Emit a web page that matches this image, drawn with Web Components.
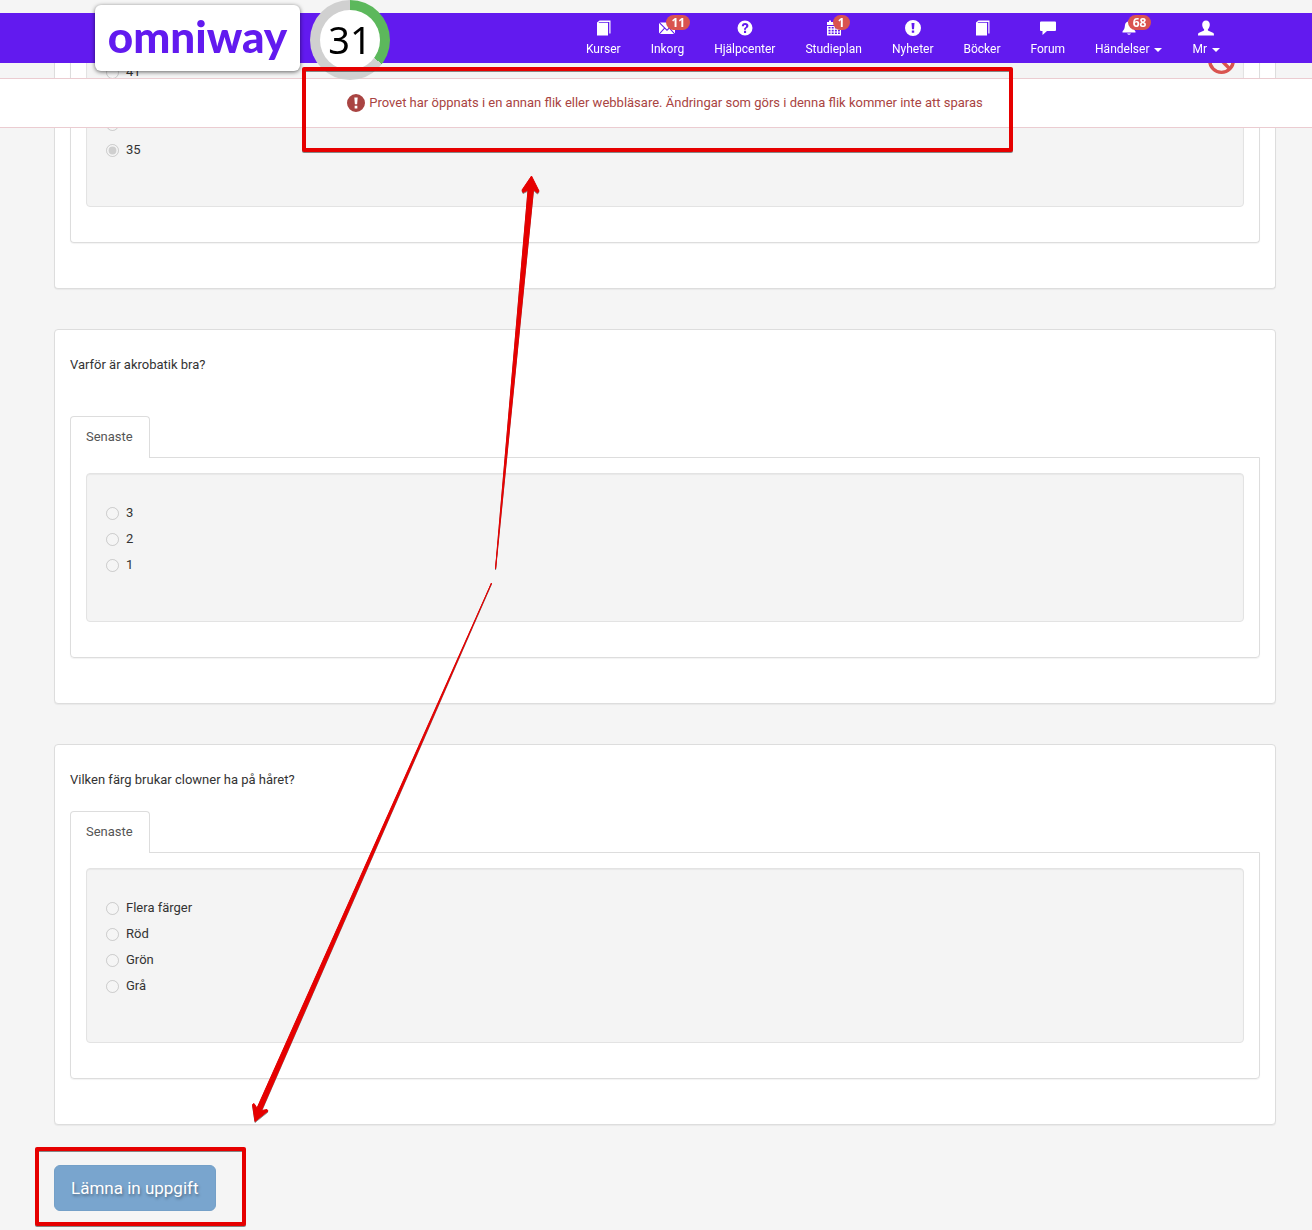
<!DOCTYPE html>
<html lang="sv">
<head>
<meta charset="utf-8">
<meta name="viewport" content="width=device-width, initial-scale=1">
<title>Omniway</title>
<style>
	html {
		background: #f5f5f5;
	}

	body {
		color: #333;
		font: 13px/20px Roboto, "Noto Sans", sans-serif;
		margin: 0;
		position: relative;
	}

	main {
		display: flex;
		flex-direction: column;
		gap: 40px;
		padding: 0 36px 17px 54px;
	}
</style>
</head>
<body>
<page-header>
	<site-logo slot="brand">omniway</site-logo>
	<countdown-ring slot="brand" value="31"></countdown-ring>
	<nav-item icon="book">Kurser</nav-item>
	<nav-item icon="mail" badge="11">Inkorg</nav-item>
	<nav-item icon="help">Hjälpcenter</nav-item>
	<nav-item icon="calendar" badge="1">Studieplan</nav-item>
	<nav-item icon="alert">Nyheter</nav-item>
	<nav-item icon="book">Böcker</nav-item>
	<nav-item icon="comment">Forum</nav-item>
	<nav-item icon="bell" badge="68" menu>Händelser</nav-item>
	<nav-item icon="user" menu>Mr</nav-item>
	<page-alert slot="alert">Provet har öppnats i en annan flik eller webbläsare. Ändringar som görs i denna flik kommer inte att sparas</page-alert>
</page-header>

<main>
	<question-card continued>
		<answer-option>41</answer-option>
		<answer-option></answer-option>
		<answer-option>33</answer-option>
		<answer-option checked>35</answer-option>
		<svg-icon slot="mark" name="ban"></svg-icon>
	</question-card>

	<question-card roomy>
		<span slot="question">Varför är akrobatik bra?</span>
		<answer-option>3</answer-option>
		<answer-option>2</answer-option>
		<answer-option>1</answer-option>
	</question-card>

	<question-card>
		<span slot="question">Vilken färg brukar clowner ha på håret?</span>
		<answer-option>Flera färger</answer-option>
		<answer-option>Röd</answer-option>
		<answer-option>Grön</answer-option>
		<answer-option>Grå</answer-option>
	</question-card>

	<submit-button>Lämna in uppgift</submit-button>
</main>

<markup-layer></markup-layer>

<script>
const ICONS = {
	book: `<path d="M4.500.5h11v13h-1.200V2H4.200L3.500 2.800h9.500V15.500H2V2.500z"/>`,
	mail: `<path d="M0 3l5 5-5 5.500zM16 3l-5 5 5 5.500zM1 2.500h14L8 9.500zM5.700 8.800L8 11l2.300-2.200L15 14H1z"/>`,
	help: `<path fill-rule="evenodd" d="M8 .5a7.500 7.500 0 1 1 0 15a7.500 7.500 0 0 1 0-15zM4.800 6.300h2.100c0-.9.400-1.400 1.200-1.400.7 0 1.100.4 1.100 1 0 .7-.4 1-1 1.500C7.300 8 7 8.500 7 9.700h2c0-.8.200-1.100.9-1.600.9-.7 1.500-1.300 1.500-2.400C11.400 4 10.100 3 8.200 3 6.100 3 4.800 4.200 4.800 6.300zM7 10.800V13h2.100v-2.200z"/>`,
	alert: `<path fill-rule="evenodd" d="M8 0a8 8 0 1 1 0 16A8 8 0 0 1 8 0zM6.500 3l.5 6.200h2L9.500 3zM6.800 10.400v2.400h2.400v-2.400z"/>`,
	calendar: `<path fill-rule="evenodd" d="M1 2h2V.5h2V2h6V.5h2V2h2v3H1zM1 6h14v9.500H1zM2.500 7v1.600h2V7zm3.200 0v1.600h2V7zm3.200 0v1.600h2V7zm3.100 0v1.600h1.900V7zM2.500 9.800v1.600h2V9.800zm3.200 0v1.600h2V9.800zm3.200 0v1.600h2V9.800zm3.100 0v1.600h1.900V9.800zM2.500 12.600v1.500h2v-1.500zm3.200 0v1.500h2v-1.500zm3.200 0v1.500h2v-1.500zm3.100 0v1.500h1.900v-1.500z"/>`,
	comment: `<path d="M1 1.500h14a1 1 0 0 1 1 1V10a1 1 0 0 1-1 1H7l-4.500 4V11H1a1 1 0 0 1-1-1V2.500a1 1 0 0 1 1-1z"/>`,
	bell: `<path d="M7 1.500C7 0 9 0 9 1.500c2.500.6 3 2.500 3.200 5 .2 2.200 1 3.200 2.300 5v1h-13v-1c1.300-1.800 2.100-2.800 2.300-5C4 4 4.500 2.100 7 1.500zM6 13.500h4q-2 2.600-4 0z"/>`,
	user: `<path d="M8 .5c2.500 0 3.800 1.700 3.800 4.200 0 1.900-.8 3.500-1.900 4.500v1.300l5 2.200c.8.400 1.100 1 1.100 2.800H0c0-1.800.3-2.400 1.100-2.800l5-2.200V9.200C5 8.200 4.200 6.600 4.200 4.700 4.200 2.200 5.500.5 8 .5z"/>`,
	ban: `<g fill="none" stroke="currentColor" stroke-width="2"><circle cx="8" cy="8" r="7"/><path d="M3 3l10 10"/></g>`
};

class SvgIcon extends HTMLElement {
	constructor() {
		super();
		this.attachShadow({mode: "open"});
	}

	connectedCallback() {
		this.shadowRoot.innerHTML = `
      <style>
        :host {
          block-size: var(--icon-size, 16px);
          display: inline-block;
          flex: none;
          inline-size: var(--icon-size, 16px);
        }

        svg {
          display: block;
          fill: currentColor;
          height: 100%;
          width: 100%;
        }
      </style>

      <svg viewBox="0 0 16 16" aria-hidden="true">${ICONS[this.getAttribute("name")]}</svg>
    `;
	}
}

class SiteLogo extends HTMLElement {
	constructor() {
		super();
		this.attachShadow({mode: "open"});
		this.shadowRoot.innerHTML = `
      <style>
        :host {
          display: block;
        }

        a {
          background: #fff;
          block-size: 66px;
          border-radius: 6px;
          box-shadow: 0 1px 4px rgb(0 0 0 / 60%);
          box-sizing: border-box;
          color: #621aef;
          display: block;
          font: 900 44px/62px Lato, sans-serif;
          inline-size: 205px;
          text-align: center;
          text-decoration: none;
        }
      </style>

      <a href="#"><slot></slot></a>
    `;
	}
}

class CountdownRing extends HTMLElement {
	constructor() {
		super();
		this.attachShadow({mode: "open"});
	}

	connectedCallback() {
		this.shadowRoot.innerHTML = `
      <style>
        :host {
          background: conic-gradient(#5cb85c 127deg, #d0d0d0 0);
          block-size: 80px;
          border-radius: 50%;
          display: grid;
          inline-size: 80px;
          place-items: center;
        }

        span {
          background: #fff;
          block-size: 60px;
          border-radius: 50%;
          color: #000;
          font: 38px/58px "Noto Sans", sans-serif;
          inline-size: 60px;
          text-align: center;
        }
      </style>

      <span>${this.getAttribute("value")}</span>
    `;
	}
}

class NavItem extends HTMLElement {
	constructor() {
		super();
		this.attachShadow({mode: "open"});
	}

	connectedCallback() {
		const badge = this.getAttribute("badge");
		this.shadowRoot.innerHTML = `
      <style>
        :host {
          display: block;
        }

        a {
          align-items: center;
          color: #fff;
          display: flex;
          flex-direction: column;
          font-size: 12px;
          gap: 5px;
          line-height: 16px;
          padding: 7px 15px 6px;
          position: relative;
          text-decoration: none;
        }

        .label {
          align-items: center;
          display: flex;
          gap: 5px;
        }

        .caret {
          border: 4px solid transparent;
          border-block-end: 0;
          border-block-start-color: #fff;
          margin-block-start: 2px;
        }

        .badge {
          background: #d9534f;
          border-radius: 8px;
          font: 700 12px/15px "Open Sans", sans-serif;
          left: calc(50% - 1px);
          padding: 0 5px;
          position: absolute;
          top: 2px;
        }
      </style>

      <a href="#">
        <svg-icon name="${this.getAttribute("icon")}"></svg-icon>
        ${badge ? `<span class="badge">${badge}</span>` : ""}
        <span class="label"><slot></slot>${this.hasAttribute("menu") ? `<i class="caret"></i>` : ""}</span>
      </a>
    `;
	}
}

class PageHeader extends HTMLElement {
	constructor() {
		super();
		this.attachShadow({mode: "open"});
		this.shadowRoot.innerHTML = `
      <style>
        :host {
          display: block;
          inset-block-start: 0;
          inset-inline: 0;
          position: fixed;
          z-index: 1;
        }

        .top {
          background: linear-gradient(#f5f5f5 13px, #621aef 0);
          block-size: 63px;
          display: flex;
          justify-content: space-between;
          padding-inline: 95px 77px;
          position: relative;
          z-index: 1;
        }

        .brand {
          align-items: flex-start;
          display: flex;
          gap: 10px;
        }

        ::slotted(site-logo) {
          margin-block-start: 5px;
        }

        nav {
          display: flex;
          padding-block-start: 13px;
        }

        .alert {
          margin-block-start: 15px;
        }
      </style>

      <div class="top">
        <div class="brand"><slot name="brand"></slot></div>
        <nav><slot></slot></nav>
      </div>
      <div class="alert"><slot name="alert"></slot></div>
    `;
	}
}

class PageAlert extends HTMLElement {
	constructor() {
		super();
		this.attachShadow({mode: "open"});
		this.shadowRoot.innerHTML = `
      <style>
        :host {
          --icon-size: 18px;
          align-items: center;
          background: #fff;
          border-block: 1px solid #ebccd1;
          color: #a94442;
          display: flex;
          gap: 4px;
          justify-content: center;
          padding: 14px 36px 14px 54px;
        }
      </style>

      <svg-icon name="alert"></svg-icon>
      <span role="alert"><slot></slot></span>
    `;
	}
}

class QuestionCard extends HTMLElement {
	constructor() {
		super();
		this.attachShadow({mode: "open"});
		this.shadowRoot.innerHTML = `
      <style>
        :host {
          background: #fff;
          border: 1px solid #ddd;
          border-radius: 4px;
          box-shadow: 0 1px 1px rgb(0 0 0 / 5%);
          display: block;
          padding: 25px 15px 45px;
        }

        p {
          margin: 0 0 21px;
        }

        :host([roomy]) p {
          margin-block-end: 41px;
        }

        .tabs {
          display: flex;
        }

        .tabs a {
          background: #fff;
          border: 1px solid #ddd;
          border-block-end: 0;
          border-radius: 4px 4px 0 0;
          color: #555;
          margin-block-end: -1px;
          padding: 10px 16px 11px 15px;
          position: relative;
          text-decoration: none;
        }

        .panel {
          border: 1px solid #ddd;
          border-radius: 0 0 4px 4px;
          box-shadow: 0 1px 1px rgb(0 0 0 / 5%);
          padding: 15px 15px 35px;
        }

        .well {
          background: #f4f4f4;
          border: 1px solid #e3e3e3;
          border-radius: 4px;
          box-shadow: inset 0 1px 1px rgb(0 0 0 / 5%);
          display: flex;
          justify-content: space-between;
          padding: 26px 8px 43px 19px;
        }

        ::slotted(svg-icon) {
          --icon-size: 27px;
          color: #d9534f;
        }

        /* the first card runs on under the fixed header */
        :host([continued]) {
          border-block-start: 0;
          padding-block-start: 0;
        }

        :host([continued]) :is(p, .tabs) {
          display: none;
        }

        :host([continued]) .panel {
          border-block-start: 0;
          padding-block-start: 0;
        }

        :host([continued]) .well {
          padding-block-start: 46px;
        }

        :host([continued]) .options {
          padding-block-start: 12px;
        }
      </style>

      <p><slot name="question"></slot></p>
      <div class="tabs"><a href="#">Senaste</a></div>
      <div class="panel">
        <div class="well">
          <div class="options"><slot></slot></div>
          <slot name="mark"></slot>
        </div>
      </div>
    `;
	}
}

class AnswerOption extends HTMLElement {
	constructor() {
		super();
		this.attachShadow({mode: "open"});
	}

	connectedCallback() {
		this.shadowRoot.innerHTML = `
      <style>
        :host {
          display: block;
        }

        label {
          align-items: center;
          display: flex;
          gap: 7px;
          min-block-size: 26px;
        }

        input {
          block-size: 13px;
          inline-size: 13px;
          margin: 0;
        }
      </style>

      <label><input type="radio" disabled ${this.hasAttribute("checked") ? "checked" : ""}><slot></slot></label>
    `;
	}
}

class SubmitButton extends HTMLElement {
	constructor() {
		super();
		this.attachShadow({mode: "open"});
		this.shadowRoot.innerHTML = `
      <style>
        :host {
          display: block;
        }

        button {
          background: #79a5ce;
          border: 1px solid #74a0c8;
          border-radius: 6px;
          color: #fff;
          display: block;
          font: 17px/24px Roboto, sans-serif;
          padding: 10px 16px;
          text-shadow: 1px 2px 3px rgb(0 0 0 / 35%);
        }
      </style>

      <button type="button" disabled><slot></slot></button>
    `;
	}
}

class MarkupLayer extends HTMLElement {
	constructor() {
		super();
		this.attachShadow({mode: "open"});
		this.shadowRoot.innerHTML = `
      <style>
        :host {
          inset-block-start: 0;
          inset-inline-start: 0;
          pointer-events: none;
          position: absolute;
          z-index: 2;
        }

        svg {
          display: block;
          filter: drop-shadow(0 1px 0 rgb(0 0 0 / 45%));
        }

        rect {
          fill: none;
          stroke: #e60000;
          stroke-linejoin: round;
          stroke-width: 4;
        }

        path {
          fill: #e60000;
          stroke: #e60000;
          stroke-linejoin: round;
        }
      </style>

      <svg width="1312" height="1228" aria-hidden="true">
        <rect x="304" y="69" width="707" height="81"/>
        <rect x="37" y="1149" width="207" height="75"/>
        <path d="M495.500 569L528 190l-5 2.500-1-2.500 9.500-14 7.500 15-1.500 2-4-3.500z"/>
        <path d="M491.500 583L257 1108l-3-4.500-1.500 1 2.500 17 13-10.500-1-1.500-5.500 1z"/>
      </svg>
    `;
	}
}

customElements.define("svg-icon", SvgIcon);
customElements.define("site-logo", SiteLogo);
customElements.define("countdown-ring", CountdownRing);
customElements.define("nav-item", NavItem);
customElements.define("page-header", PageHeader);
customElements.define("page-alert", PageAlert);
customElements.define("question-card", QuestionCard);
customElements.define("answer-option", AnswerOption);
customElements.define("submit-button", SubmitButton);
customElements.define("markup-layer", MarkupLayer);
</script>
</body>
</html>
